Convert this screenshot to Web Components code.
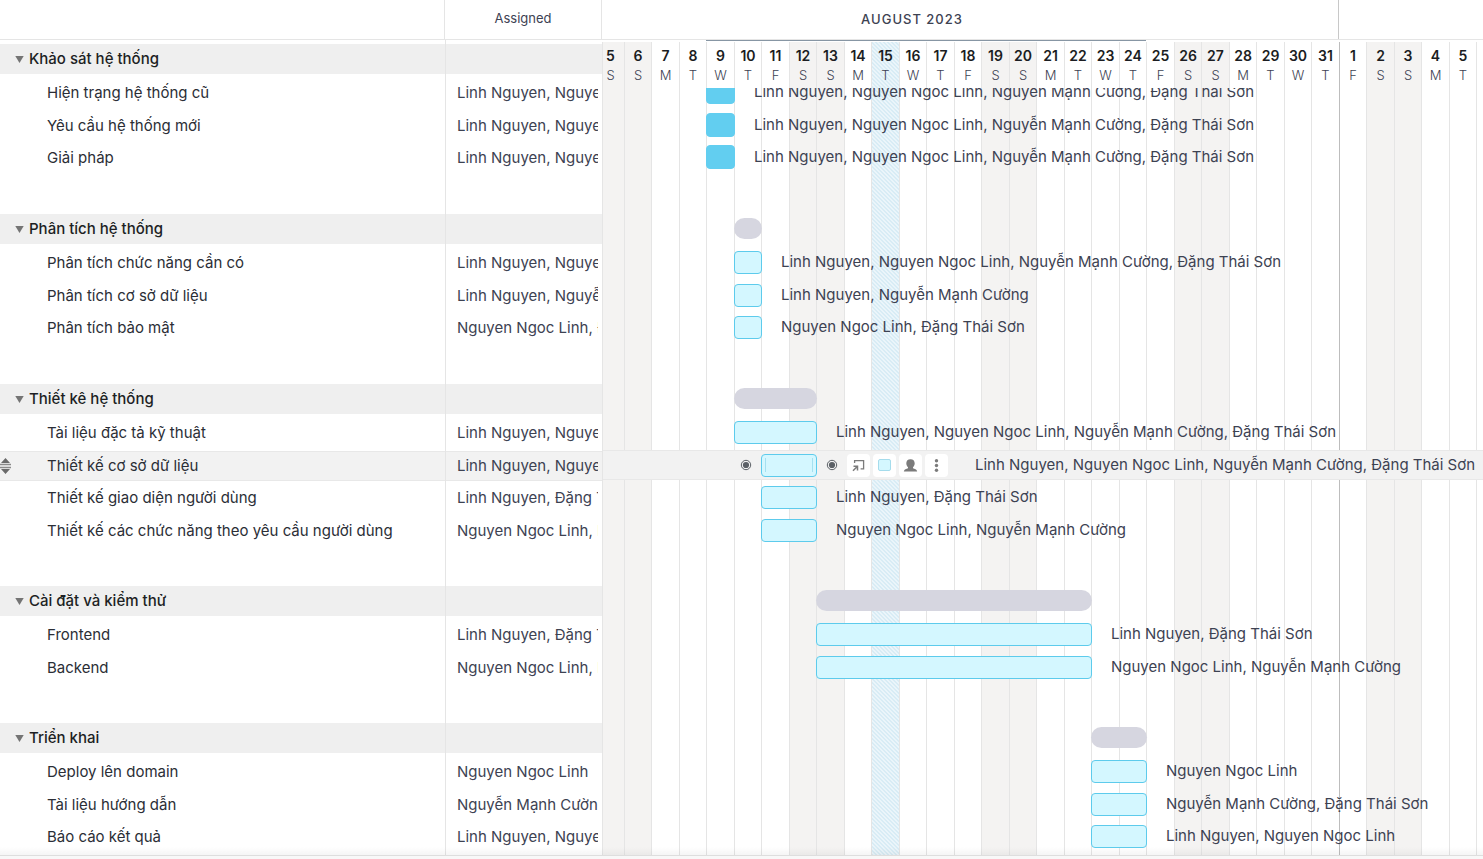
<!DOCTYPE html>
<html lang="vi">
<head>
<meta charset="utf-8">
<meta name="viewport" content="width=device-width, initial-scale=1">
<title>Gantt</title>
<style>
  body { margin: 0; font-family: Inter, "Noto Sans", sans-serif; font-size: 15px; line-height: 20px; color: #3d4252; background: #fff; }
</style>
</head>
<body>
<gantt-app></gantt-app>

<template id="app-tpl">
  <style>
    :host { display: flex; flex-direction: column; height: 100vh; overflow: hidden; }
    main { flex: 1; min-height: 0; display: flex; overflow: hidden; position: relative; }
    main::after { content: ""; position: absolute; inset: auto 0 0 0; height: 8px; background: linear-gradient(rgba(0,0,0,0), rgba(0,0,0,.04)); pointer-events: none; }
    task-table { flex: 0 0 602px; }
    task-timeline { flex: 1; min-width: 0; }
    footer { height: 3px; border-top: 1px solid #dedede; background: #f8f8f8; }
  </style>
  <main><task-table></task-table><task-timeline></task-timeline></main>
  <footer></footer>
</template>

<template id="table-tpl">
  <style>
    :host { display: block; }
    table { width: 100%; table-layout: fixed; border-collapse: separate; border-spacing: 0; }
    col.who { width: 157px; }
    th, td { padding: 0; text-align: left; font-weight: 400; }
    thead th { box-sizing: border-box; height: 40px; padding-bottom: 3px; border-bottom: 1px solid #e5e5e5; border-right: 1px solid #e5e5e5; font-size: 13px; text-align: center; }
    td + td, th.group + td { border-left: 1px solid #e5e5e5; }
    .gap td { height: 4px; }
    .head > * { height: 30px; background: #efefef; }
    button { display: flex; align-items: center; gap: 5px; height: 30px; margin: 0; padding: 0 0 0 15px; border: 0; background: none; font: inherit; font-weight: 500; color: #1d1f24; white-space: nowrap; }
    button svg { width: 9px; height: 7px; fill: #747474; }
    .item td { height: 32px; padding-top: 1px; vertical-align: top; }
    .item.even td { height: 31px; }
    .item.first td { padding-top: 4px; }
    .item div { display: flex; align-items: center; height: 30px; white-space: nowrap; overflow: hidden; }
    .name div { padding-left: 47px; color: #2b2e36; }
    .name { position: relative; }
    .who div { padding: 0 4px 0 11px; }
    .who span { overflow: hidden; }
    .hover div { background: #f2f2f2; border: solid #e8e8e8; border-width: 1px 0; box-sizing: border-box; }
    .grip { position: absolute; left: 0; top: 7px; width: 12px; height: 18px; }
    .tail td { height: 39px; }
  </style>
  <table>
    <colgroup><col><col class="who"></colgroup>
    <thead><tr><th></th><th scope="col">Assigned</th></tr></thead>
    <tbody><tr class="gap"><td></td><td></td></tr></tbody>
  </table>
</template>

<template id="timeline-tpl">
  <style>
    :host { display: flex; flex-direction: column; --days: repeat(17, 28px 27px); }
    .months { display: flex; height: 39px; border-bottom: 1px solid #e5e5e5; overflow: hidden; }
    .month { flex: 0 0 853px; box-sizing: border-box; border-right: 1px solid #c8c8c8; text-align: center; font-size: 13px; font-weight: 500; line-height: 38px; letter-spacing: 1px; }
    .month:first-child { margin-left: -116px; }
    .range { display: grid; grid-template-columns: var(--days); margin-left: -6px; height: 2px; }
    .range i { grid-column: 5 / 21; height: 1px; background: #8796a4; }
    .board { flex: 1; min-height: 0; display: grid; grid-template: 100% / 100%; overflow: hidden; border-left: 1px solid #e5e5e5; }
    .columns, .rows { grid-area: 1 / 1; min-width: 0; }
    .columns { display: grid; grid-template-columns: var(--days); margin-left: -7px; }
    .rows { margin-top: 46px; overflow: hidden; }
    .scroll { margin-top: -45px; }
    .inner { display: grid; grid-template-columns: var(--days); align-items: center; height: 30px; margin-left: -7px; }
    .head .inner { height: 31px; padding-bottom: 2px; }
    .item { box-sizing: border-box; height: 33px; padding-top: 1px; }
    .item.even { height: 32px; }
    .hover { padding-bottom: 1px; background: #f2f2f2 content-box; }
    .hover .inner { box-sizing: border-box; border: solid #e8e8e8; border-width: 1px 0; }
    .tail { height: 39px; }
    .summary { height: 21px; border-radius: 11px; background: #d6d6e0; margin-right: -1px; }
    .after { display: flex; align-items: center; white-space: nowrap; padding-left: 20px; }
    .summary, .after, task-bar, pin-dot { grid-row: 1; }
    .before { justify-self: center; margin-right: 3px; }
    .tools { padding-left: 10px; }
    .tools task-tools { margin: 0 27px 0 9px; }
  </style>
  <div class="months"><div class="month">AUGUST 2023</div></div>
  <div class="range"><i></i></div>
  <div class="board"><div class="columns"></div><div class="rows"><div class="scroll"></div></div></div>
</template>

<template id="day-tpl">
  <style>
    :host { display: block; box-sizing: border-box; border-left: 1px solid #e5e5e5; text-align: center; padding-top: 4px; }
    :host([weekend]) { background: #f4f3f2; }
    :host([today]) { background: linear-gradient(45deg, #ebf5fa 25%, #d8ecf5 25% 50%, #ebf5fa 50% 75%, #d8ecf5 75%) 0 0 / 4px 4px; }
    :host([month-start]) { border-left-color: #bdbdbd; }
    b, span { display: block; }
    b { font-size: 14px; font-weight: 600; line-height: 20px; color: #1b1d22; }
    span { font-size: 13px; font-weight: 300; line-height: 18px; color: #3d4252; }
  </style>
  <b></b><span></span>
</template>

<template id="bar-tpl">
  <style>
    :host { display: flex; justify-content: space-between; align-items: center; box-sizing: border-box; height: 23px; margin-right: -1px; padding: 0 3px; border: 1px solid #5dcbec; border-radius: 4px; background: #d4f7ff; }
    :host([done]) { height: 24px; background: #62cef0; border-color: #62cef0; }
    i { display: none; width: 1px; height: 14px; background: #a5e0f0; }
    :host([active]) i { display: block; }
  </style>
  <i></i><i></i>
</template>

<template id="dot-tpl">
  <style>:host { display: block; width: 12px; height: 12px; } svg { display: block; }</style>
  <svg width="12" height="12" viewBox="0 0 12 12"><circle cx="6" cy="6" r="4.7" fill="#f2f2f2" stroke="#5b6066" stroke-width="1"/><circle cx="6" cy="6" r="3.1" fill="#5b6066"/></svg>
</template>

<template id="tools-tpl">
  <style>
    :host { display: flex; gap: 3px; }
    button { display: grid; place-items: center; width: 23px; height: 23px; padding: 0; border: 0; border-radius: 4px; background: #fff; }
    svg { display: block; width: 15px; height: 15px; }
  </style>
  <button aria-label="Open"><svg viewBox="0 0 15 15" fill="none" stroke="#7b7b7b" stroke-width="1.3"><path d="M3.600 5V2.600h9v8.300H9.600"/><path d="M2 12.800l4.300-4.300M2.500 8.200h4v4.200" stroke-width="1.500"/></svg></button>
  <button aria-label="Color"><svg viewBox="0 0 15 15"><rect x="1.5" y="1.500" width="12" height="11" rx="1.500" fill="#d4f7ff" stroke="#a5dcec"/></svg></button>
  <button aria-label="Assign"><svg viewBox="0 0 15 15" fill="#7b7b7b"><path d="M7.5 1.200c2.700 0 4.200 1.600 4.200 4.100 0 1.800-.8 3.100-1.700 4v1c1.700.6 3.700.7 4.200 3.200H.8c.5-2.500 2.500-2.600 4.200-3.200v-1c-.9-.9-1.700-2.200-1.700-4 0-2.500 1.500-4.100 4.200-4.100z"/></svg></button>
  <button aria-label="More"><svg viewBox="0 0 15 15" fill="#7b7b7b"><circle cx="7.500" cy="2.700" r="1.700"/><circle cx="7.500" cy="7.500" r="1.700"/><circle cx="7.500" cy="12.300" r="1.700"/></svg></button>
</template>

<script>
const L = 'Linh Nguyen', N = 'Nguyen Ngoc Linh', C = 'Nguyễn Mạnh Cường', S = 'Đặng Thái Sơn';
const ALL = [L, N, C, S];
// Days of August 2023; "to" is exclusive.
const FIRST_DAY = 5;
const PLAN = [
  { name: 'Khảo sát hệ thống', from: 9, to: 10, tasks: [
    { name: 'Hiện trạng hệ thống cũ', who: ALL, from: 9, to: 10, done: true },
    { name: 'Yêu cầu hệ thống mới', who: ALL, from: 9, to: 10, done: true },
    { name: 'Giải pháp', who: ALL, from: 9, to: 10, done: true } ] },
  { name: 'Phân tích hệ thống', from: 10, to: 11, tasks: [
    { name: 'Phân tích chức năng cần có', who: ALL, from: 10, to: 11 },
    { name: 'Phân tích cơ sở dữ liệu', who: [L, C], from: 10, to: 11 },
    { name: 'Phân tích bảo mật', who: [N, S], from: 10, to: 11 } ] },
  { name: 'Thiết kê hệ thống', from: 10, to: 13, tasks: [
    { name: 'Tài liệu đặc tả kỹ thuật', who: ALL, from: 10, to: 13 },
    { name: 'Thiết kế cơ sở dữ liệu', who: ALL, from: 11, to: 13, hover: true },
    { name: 'Thiết kế giao diện người dùng', who: [L, S], from: 11, to: 13 },
    { name: 'Thiết kế các chức năng theo yêu cầu người dùng', who: [N, C], from: 11, to: 13 } ] },
  { name: 'Cài đặt và kiểm thử', from: 13, to: 23, tasks: [
    { name: 'Frontend', who: [L, S], from: 13, to: 23 },
    { name: 'Backend', who: [N, C], from: 13, to: 23 } ] },
  { name: 'Triển khai', from: 23, to: 25, tasks: [
    { name: 'Deploy lên domain', who: [N], from: 23, to: 25 },
    { name: 'Tài liệu hướng dẫn', who: [C, S], from: 23, to: 25 },
    { name: 'Báo cáo kết quả', who: [L, N], from: 23, to: 25 } ] }
];
const rowClass = (t, i) => 'item' + (i % 2 ? ' even' : '') + (i ? '' : ' first') + (t.hover ? ' hover' : '');

class Base extends HTMLElement {
  connectedCallback() {
    if (this.shadowRoot) return;
    this.attachShadow({ mode: 'open' }).append(document.getElementById(this.constructor.tpl).content.cloneNode(true));
    this.render(this.shadowRoot);
  }
  render() {}
}
customElements.define('pin-dot', class extends Base { static tpl = 'dot-tpl'; });
customElements.define('task-tools', class extends Base { static tpl = 'tools-tpl'; });
customElements.define('task-bar', class extends Base { static tpl = 'bar-tpl'; });
customElements.define('day-column', class extends Base {
  static tpl = 'day-tpl';
  render(root) {
    root.querySelector('b').textContent = this.getAttribute('day');
    root.querySelector('span').textContent = this.getAttribute('letter');
  }
});
customElements.define('task-table', class extends Base {
  static tpl = 'table-tpl';
  render(root) {
    root.querySelector('table').insertAdjacentHTML('beforeend', PLAN.map(g => `<tbody>
      <tr class="head"><th class="group" scope="rowgroup"><button aria-expanded="true"><svg viewBox="0 0 9 7"><path d="M.3 0h8.400L4.500 7z"/></svg>${g.name}</button></th><td></td></tr>
      ${g.tasks.map((t, i) => `<tr class="${rowClass(t, i)}"><td class="name"><div>${t.name}</div>${t.hover ? '<svg class="grip" viewBox="0 0 12 18"><path d="M5.500 1l4.500 5H1zM5.500 17l4.500-5H1z" fill="#6b6b6b"/><path d="M0 7.500h11M0 10.500h11" stroke="#8a8a8a" stroke-width="1.500"/></svg>' : ''}</td><td class="who"><div><span>${t.who.join(', ')}</span></div></td></tr>`).join('')}
      <tr class="tail"><td></td><td></td></tr></tbody>`).join(''));
  }
});
customElements.define('task-timeline', class extends Base {
  static tpl = 'timeline-tpl';
  render(root) {
    let days = '';
    for (let d = FIRST_DAY; d < FIRST_DAY + 34; d++) {
      const w = d % 7;
      days += `<day-column day="${d > 31 ? d - 31 : d}" letter="${'MTWTFSS'[w]}"${w > 4 ? ' weekend' : ''}${d === 15 ? ' today' : ''}${d === 32 ? ' month-start' : ''}></day-column>`;
    }
    root.querySelector('.columns').innerHTML = days;
    const col = d => d - FIRST_DAY + 1;
    const span = t => `style="grid-column:${col(t.from)}/${col(t.to)}"`;
    root.querySelector('.scroll').innerHTML = PLAN.map(g => `
      <div class="head"><div class="inner"><div class="summary" ${span(g)}></div></div></div>
      ${g.tasks.map((t, i) => `<div class="${rowClass(t, i)}"><div class="inner">
        ${t.hover ? `<pin-dot class="before" style="grid-column:${col(t.from) - 1}"></pin-dot>` : ''}
        <task-bar ${t.done ? 'done' : ''} ${t.hover ? 'active' : ''} ${span(t)}></task-bar>
        <div class="after${t.hover ? ' tools' : ''}" style="grid-column:${col(t.to)}/-1">${t.hover ? '<pin-dot></pin-dot><task-tools></task-tools>' : ''}<span>${t.who.join(', ')}</span></div>
      </div></div>`).join('')}
      <div class="tail"></div>`).join('');
  }
});
customElements.define('gantt-app', class extends Base { static tpl = 'app-tpl'; });
</script>
</body>
</html>
